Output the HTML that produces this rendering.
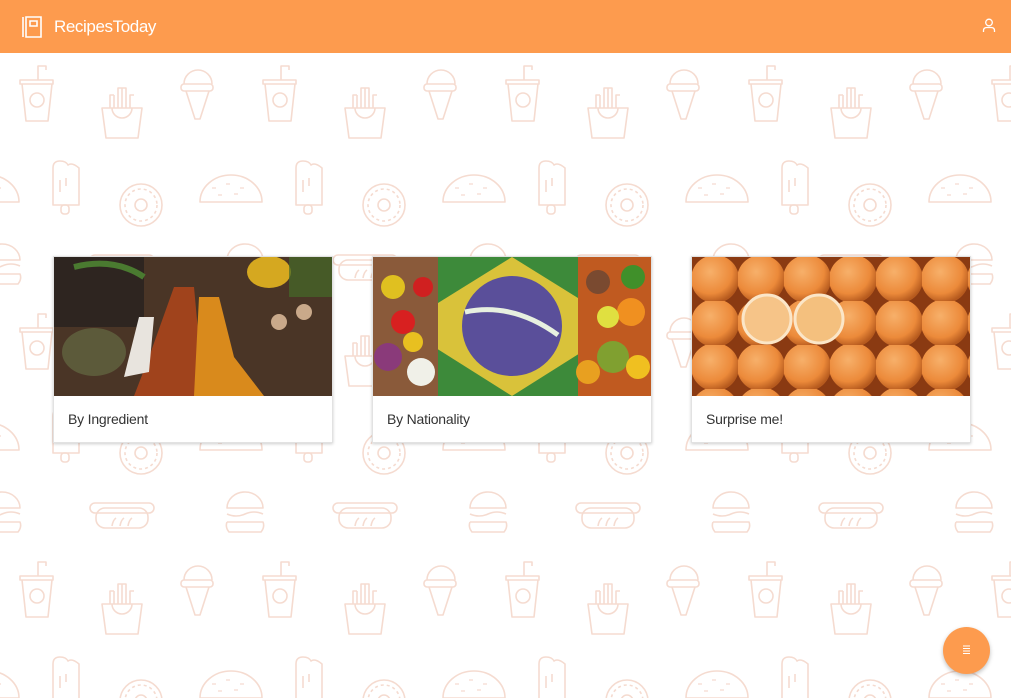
<!DOCTYPE html>
<html><head><meta charset="utf-8"><style>
*{margin:0;padding:0;box-sizing:border-box}
body{width:1011px;height:698px;overflow:hidden;background:#fff;font-family:"Liberation Sans",sans-serif;position:relative}
#bg{position:absolute;left:0;top:0}
header{position:absolute;left:0;top:0;width:1011px;height:53px;background:#fd9b4e;color:#fff}
header .t{position:absolute;left:54px;top:17px;font-size:17px;letter-spacing:-0.4px}
.card{position:absolute;top:256px;width:280px;height:187px;background:#fff;border:1px solid #e2e2e2;box-shadow:0 1px 3px rgba(0,0,0,.2)}
.card svg{display:block;width:278px;height:139px}
.card .l{position:absolute;left:14px;top:154px;font-size:14px;color:#333;letter-spacing:-0.2px}
.fab{position:absolute;left:943px;top:627px;width:47px;height:47px;border-radius:50%;background:#fd9b4e;box-shadow:0 2px 4px rgba(0,0,0,.25)}
</style></head><body>
<svg id="bg" width="1011" height="698">
<defs><pattern id="p" width="243" height="248" patternUnits="userSpaceOnUse" patternTransform="translate(0,56)">
<g transform="translate(0,-56)" fill="none" stroke="#f5dbd0" stroke-width="1.6" stroke-linejoin="round">
<rect x="20" y="80" width="33" height="4"/><path d="M22 84L26 121H48L52 84"/><circle cx="37" cy="100" r="7"/><path d="M38 80V66H46V70"/>
<path d="M102 108L106 138H138L142 108Z"/><path d="M110 108V95H114M118 108V88H126V108M130 108V95H134M114 95V108M122 88V108"/><path d="M112 108A10 10 0 0 0 132 108"/>
<path d="M184 84A14 14 0 0 1 212 84"/><rect x="181" y="84" width="32" height="7" rx="3"/><path d="M186 91L195 119H200L209 91"/>
<path d="M53 205V168Q53 161 60 161Q66 161 68 165Q72 162 79 168V205Z"/><rect x="61" y="205" width="8" height="9" rx="3"/><path d="M60 180V192M66 178V186"/>
<circle cx="141" cy="205" r="21"/><circle cx="141" cy="205" r="6"/><circle cx="141" cy="205" r="16" stroke-dasharray="3 3"/>
<path d="M200 202A31 27 0 0 1 262 202Z"/><path d="M-43 202A31 27 0 0 1 19 202Z"/>
<path d="M212 188h4M226 184h4M240 188h4M218 195h4M234 194h4M-31 188h4M-17 184h4M-3 188h4M-25 195h4M-9 194h4" stroke-width="1.2"/>
<path d="M-16 260A18 16 0 0 1 20 260ZM-16 266Q-7 270 2 266T20 266M-16 274H20Q22 279 18 284H-14Q-18 279 -16 274"/>
<path d="M227 260A18 16 0 0 1 263 260ZM227 266Q236 270 245 266T263 266M227 274H263Q265 279 261 284H229Q225 279 227 274"/>
<rect x="90" y="255" width="64" height="10" rx="5"/><rect x="96" y="260" width="52" height="20" rx="9"/><path d="M112 278Q113 272 116 270M120 278Q121 272 124 270M128 278Q129 272 132 270"/>
</g></pattern></defs>
<rect width="1011" height="698" fill="url(#p)"/>
</svg>
<header>
<svg style="position:absolute;left:22px;top:16px" width="20" height="22" viewBox="0 0 20 22" fill="none" stroke="#fff" stroke-width="1.6"><path d="M1 1V21M4 1H19V21H4Z"/><path d="M8 5H15V10H8Z"/></svg>
<div class="t">RecipesToday</div>
<svg style="position:absolute;left:982px;top:18px" width="14" height="15" viewBox="0 0 14 15" fill="none" stroke="#fff" stroke-width="1.3"><circle cx="7" cy="4.5" r="3.3"/><path d="M1.5 14V12.5Q1.5 9.5 5 9.5H9Q12.5 9.5 12.5 12.5V14"/></svg>
</header>
<div class="card" style="left:53px">
<svg viewBox="0 0 278 139"><rect width="278" height="139" fill="#4a3526"/><rect width="90" height="70" fill="#2e2520"/><ellipse cx="40" cy="95" rx="32" ry="24" fill="#5c5a3a"/><path d="M80 139L95 100L120 30L140 30L150 139Z" fill="#a0431c"/><path d="M140 139L145 40L165 40L180 100L210 139Z" fill="#d98a1c"/><path d="M70 120L85 60L100 60L95 115Z" fill="#e8e4de"/><ellipse cx="215" cy="15" rx="22" ry="16" fill="#d5a820"/><circle cx="225" cy="65" r="8" fill="#c9a98a"/><circle cx="250" cy="55" r="8" fill="#c9a98a"/><path d="M20 10Q60 0 90 20" stroke="#4a7a30" stroke-width="6" fill="none"/><rect x="235" y="0" width="43" height="40" fill="#456b28" opacity=".7"/></svg>
<div class="l">By Ingredient</div></div>
<div class="card" style="left:372px">
<svg viewBox="0 0 278 139"><rect width="278" height="139" fill="#3d8a3a"/><path d="M139 0L250 69L139 139L28 69Z" fill="#d9c23a"/><circle cx="139" cy="69" r="50" fill="#5a4f9a"/><path d="M92 55Q140 45 185 78" stroke="#e7f0e0" stroke-width="5" fill="none"/><rect width="65" height="139" fill="#8a5a3a"/><circle cx="20" cy="30" r="12" fill="#e0c020"/><circle cx="30" cy="65" r="12" fill="#d82020"/><circle cx="15" cy="100" r="14" fill="#8a3a7a"/><circle cx="48" cy="115" r="14" fill="#f0f0e8"/><circle cx="50" cy="30" r="10" fill="#d02020"/><circle cx="40" cy="85" r="10" fill="#e8c020"/><rect x="205" width="73" height="139" fill="#c05a20"/><circle cx="225" cy="25" r="12" fill="#7a4a30"/><circle cx="258" cy="55" r="14" fill="#f09020"/><circle cx="235" cy="60" r="11" fill="#e0e040"/><circle cx="240" cy="100" r="16" fill="#80a030"/><circle cx="265" cy="110" r="12" fill="#f0c020"/><circle cx="215" cy="115" r="12" fill="#e8a020"/><circle cx="260" cy="20" r="12" fill="#40902a"/></svg>
<div class="l">By Nationality</div></div>
<div class="card" style="left:691px">
<svg viewBox="0 0 278 139"><defs><radialGradient id="o" cx=".4" cy=".35" r=".65"><stop offset="0" stop-color="#f7b06a"/><stop offset=".7" stop-color="#ec8a3a"/><stop offset="1" stop-color="#b65a1e"/></radialGradient><pattern id="oo" width="46" height="44" patternUnits="userSpaceOnUse"><rect width="46" height="44" fill="#8a3a12"/><circle cx="23" cy="22" r="24" fill="url(#o)"/></pattern></defs><rect width="278" height="139" fill="url(#oo)"/><circle cx="75" cy="62" r="24" fill="#f6c488" stroke="#fbe6c8" stroke-width="3"/><circle cx="127" cy="62" r="24" fill="#f4c07e" stroke="#fbe6c8" stroke-width="3"/></svg>
<div class="l">Surprise me!</div></div>
<div class="fab"><svg style="position:absolute;left:18px;top:17px" width="11" height="11" viewBox="0 0 11 11" stroke="#fff" stroke-width="1"><path d="M2 2H9M2 4.5H9M2 7H9M2 9.5H9"/></svg></div>
</body></html>
